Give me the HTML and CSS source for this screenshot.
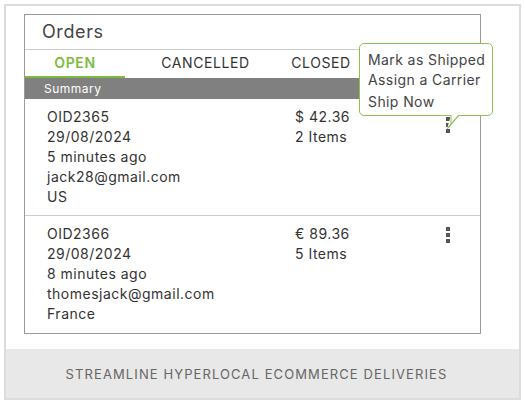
FILE: index.html
```html
<!DOCTYPE html>
<html lang="en">
  <head>
    <meta charset="UTF-8" />
    <meta name="viewport" content="width=device-width, initial-scale=1.0" />
    <title>Orders</title>
    <link rel="stylesheet" href="styles.css">
  </head>
  <body>
    <div class="frame">
      <div class="main">
        <div class="card">
          <div class="card-head">Orders</div>
          <div class="tabs">
            <div class="tab tab-open active">OPEN</div>
            <div class="tab tab-cancelled">CANCELLED</div>
            <div class="tab tab-closed">CLOSED</div>
          </div>
          <div class="summary">Summary</div>
          <div class="order">
            <div class="info">
              <p>OID2365</p>
              <p>29/08/2024</p>
              <p>5 minutes ago</p>
              <p>jack28@gmail.com</p>
              <p>US</p>
            </div>
            <div class="price">
              <p>$ 42.36</p>
              <p>2 Items</p>
            </div>
            <div class="kebab kebab-open"><span></span><span></span><span></span></div>
          </div>
          <div class="order">
            <div class="info">
              <p>OID2366</p>
              <p>29/08/2024</p>
              <p>8 minutes ago</p>
              <p>thomesjack@gmail.com</p>
              <p>France</p>
            </div>
            <div class="price">
              <p>€ 89.36</p>
              <p>5 Items</p>
            </div>
            <div class="kebab"><span></span><span></span><span></span></div>
          </div>
          <div class="menu">
            <p>Mark as Shipped</p>
            <p>Assign a Carrier</p>
            <p class="last">Ship Now</p>
            <svg class="tail" width="16" height="16" viewBox="0 0 16 16">
              <polygon points="4,0 12,0 0,14" fill="#fff" />
              <polyline points="4,0 4,9" fill="none" stroke="#8cc152" stroke-width="1" />
              <polyline points="12,0 0,14" fill="none" stroke="#8cc152" stroke-width="1.2" />
            </svg>
          </div>
        </div>
      </div>
      <div class="footer">STREAMLINE HYPERLOCAL ECOMMERCE DELIVERIES</div>
    </div>
  </body>
</html>
```

FILE: styles.css
```css
body {
  margin: 0;
  font-family: "Inter", "Open Sans", sans-serif;
  color: #333;
}
p {
  margin: 0;
  padding: 0;
}
.frame {
  margin: 4px;
  height: 396px;
  box-sizing: border-box;
  border: 2px solid #dcdcdc;
  display: flex;
  flex-direction: column;
}
.main {
  padding: 8px 0 0 18px;
}
.card {
  position: relative;
  width: 457px;
  height: 320px;
  box-sizing: border-box;
  border: 1px solid #9a9a9a;
}
.card-head {
  height: 34px;
  line-height: 34px;
  padding-left: 17px;
  font-size: 18px;
  color: #444;
  letter-spacing: 0.6px;
  border-bottom: 1px solid #ccc;
}
.tabs {
  display: flex;
  height: 28px;
}
.tab {
  text-align: center;
  line-height: 26px;
  font-size: 14px;
  color: #333;
  letter-spacing: 0.6px;
  box-sizing: border-box;
}
.tab-open {
  width: 100px;
}
.tab-cancelled {
  width: 161px;
}
.tab-closed {
  width: 70px;
}
.tab.active {
  color: #7cbd3f;
  font-weight: 600;
  border-bottom: 2px solid #7cbd3f;
}
.summary {
  height: 21px;
  line-height: 21px;
  background-color: #808080;
  color: #fff;
  font-size: 12px;
  letter-spacing: 0.5px;
  padding-left: 19px;
}
.order {
  display: flex;
  padding: 8px 0 8px 22px;
  font-size: 14px;
  line-height: 20px;
  letter-spacing: 0.5px;
}
.order + .order {
  border-top: 1px solid #ccc;
}
.info {
  width: 248px;
}
.price {
  width: 151px;
}
.kebab {
  display: flex;
  flex-direction: column;
  gap: 2px;
  margin-top: 3px;
}
.kebab-open {
  margin-top: 10px;
}
.kebab span {
  width: 4px;
  height: 4px;
  background-color: #555;
}
.menu {
  position: absolute;
  left: 334px;
  top: 28px;
  width: 134px;
  height: 73px;
  box-sizing: border-box;
  padding: 6px 0 0 8px;
  background-color: #fff;
  border: 1px solid #8cc152;
  border-radius: 5px;
  font-size: 14px;
  color: #444;
  line-height: 20px;
  letter-spacing: 0.4px;
}
.menu .last {
  margin-top: 2px;
}
.tail {
  position: absolute;
  left: 87px;
  top: 71px;
}
.footer {
  margin-top: 15px;
  flex: 1;
  background-color: #e8e8e8;
  display: flex;
  align-items: center;
  justify-content: center;
  padding-right: 12px;
  font-size: 13px;
  color: #666;
  letter-spacing: 1.1px;
}
```
